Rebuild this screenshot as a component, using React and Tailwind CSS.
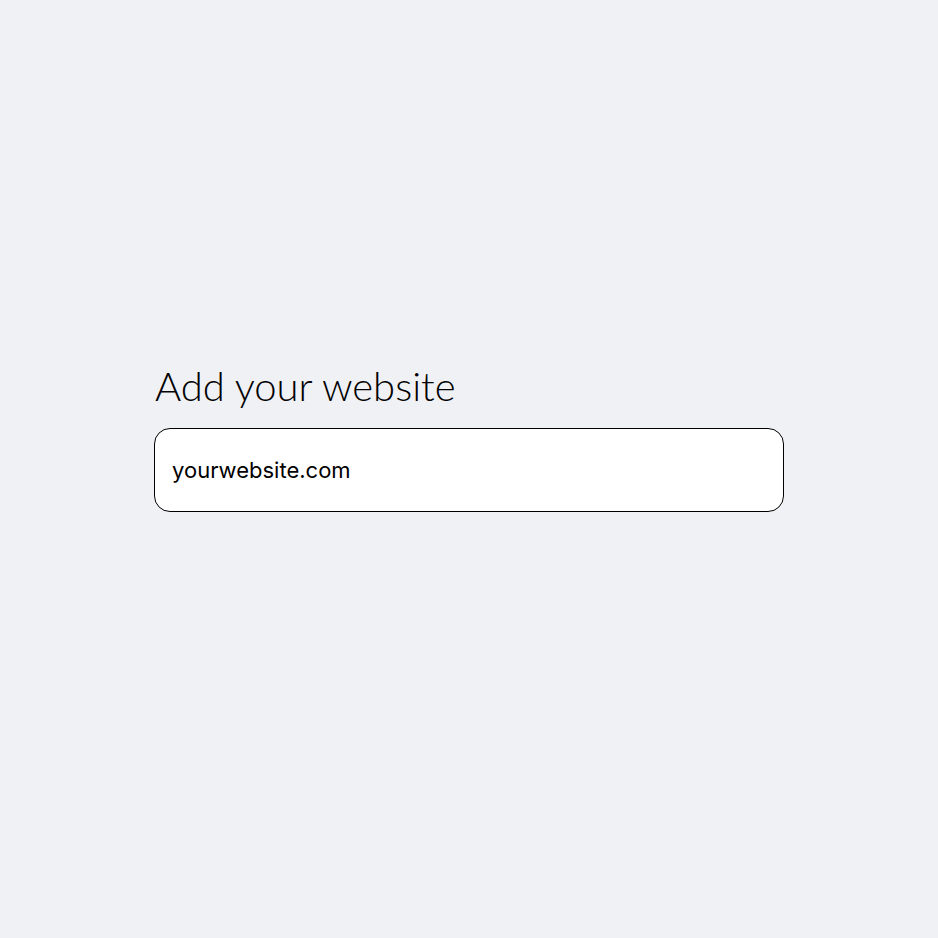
export default function App() {
    return (
        <div className="min-h-screen w-full bg-[#f0f1f5] flex justify-center pt-[362px]">
            <div className="w-[630px] flex flex-col">
                {/* Heading */}
                <h1 className="text-[40px] leading-[48px] font-light text-black font-['Lato',sans-serif] ml-px">
                    Add your website
                </h1>

                {/* Website input */}
                <div className="mt-[18px] h-[84px] rounded-[16px] border border-black bg-white flex items-center px-[17px]">
                    <span className="text-[22px] font-normal text-black font-['Inter',sans-serif]">
                        yourwebsite.com
                    </span>
                </div>
            </div>
        </div>
    );
}
